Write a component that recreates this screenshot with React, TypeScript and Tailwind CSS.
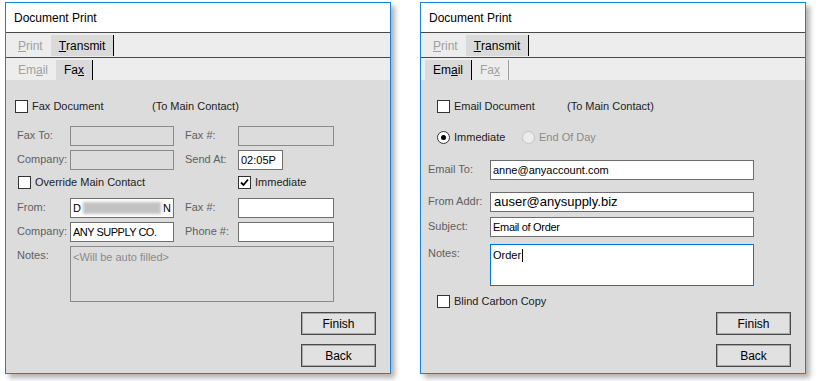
import React from "react";

const font = "font-['Liberation_Sans',Arial,sans-serif]";

function Tab({ label, hot, active, last }: { label: string; hot: number; active?: boolean; last?: boolean }) {
  const text = (
    <>
      {label.slice(0, hot)}
      <u>{label[hot]}</u>
      {label.slice(hot + 1)}
    </>
  );
  return (
    <div
      className={`flex h-full items-center px-2 text-[12px] ${
        active ? "bg-[#dadada] text-black" : "text-[#a0a0a0]"
      } ${active ? "border-r border-black" : last ? "border-r border-[#a0a0a0]" : ""}`}
    >
      {text}
    </div>
  );
}

function Check({ checked, label, className = "" }: { checked?: boolean; label: string; className?: string }) {
  return (
    <div className={`flex items-center gap-[4px] ${className}`}>
      <div className="flex h-[13px] w-[13px] shrink-0 items-center justify-center border border-[#333] bg-white">
        {checked && (
          <svg width="9" height="9" viewBox="0 0 9 9">
            <path d="M1 4.5 L3.5 7 L8 1.5" fill="none" stroke="#000" strokeWidth="1.8" />
          </svg>
        )}
      </div>
      <span className="text-[11px] leading-none text-[#222]">{label}</span>
    </div>
  );
}

function Radio({ on, disabled, label, className = "" }: { on?: boolean; disabled?: boolean; label: string; className?: string }) {
  return (
    <div className={`flex items-center gap-[4px] ${className}`}>
      <div
        className={`flex h-[13px] w-[13px] shrink-0 items-center justify-center rounded-full border ${
          disabled ? "border-[#c4c4c4] bg-[#ececec]" : "border-[#333] bg-white"
        }`}
      >
        {on && <div className="h-[5px] w-[5px] rounded-full bg-black" />}
      </div>
      <span className={`text-[11px] leading-none ${disabled ? "text-[#8a8a8a]" : "text-[#222]"}`}>{label}</span>
    </div>
  );
}

function Box({
  w,
  h = 20,
  disabled,
  focus,
  children,
  className = "",
}: {
  w: number;
  h?: number;
  disabled?: boolean;
  focus?: boolean;
  children?: React.ReactNode;
  className?: string;
}) {
  return (
    <div
      style={{ width: w, height: h }}
      className={`flex shrink-0 overflow-hidden border px-[2px] text-[11px] text-black ${
        disabled ? "border-[#8a8a8a] bg-[#dcdcdc]" : focus ? "border-[#0078d7] bg-white" : "border-[#6e6e6e] bg-white"
      } ${h > 20 ? "items-start pt-[2px]" : "items-center"} ${className}`}
    >
      {children}
    </div>
  );
}

function Label({ w, children, className = "" }: { w: number; children: React.ReactNode; className?: string }) {
  return (
    <div style={{ width: w }} className={`shrink-0 pt-[1px] text-[11px] text-[#606060] ${className}`}>
      {children}
    </div>
  );
}

function Button({ label, className = "" }: { label: string; className?: string }) {
  return (
    <div
      className={`flex h-[23px] w-[75px] items-center justify-center self-end border border-[#4a4a4a] bg-[#e1e1e1] text-[12px] text-black shadow-[inset_0_0_0_1px_#a8a8a8] ${className}`}
    >
      {label}
    </div>
  );
}

function Window({ tab, children }: { tab: "email" | "fax"; children: React.ReactNode }) {
  return (
    <div className="flex h-[372px] w-[386px] flex-col border border-[#1883d7] bg-white shadow-[4px_4px_5px_rgba(0,0,0,0.3)]">
      <div className="flex h-[30px] items-center border-b border-[#4a4a4a] pl-[8px] text-[12px] text-black">
        Document Print
      </div>
      <div className="flex h-[25px] border-b border-[#4a4a4a] bg-[#ededed] pl-[4px] pt-[2px] pb-[1px]">
        <Tab label="Print" hot={0} />
        <Tab label="Transmit" hot={0} active />
      </div>
      <div className="flex h-[22px] bg-[#ededed] pl-[4px] pt-[2px]">
        <Tab label="Email" hot={2} active={tab === "email"} />
        <Tab label="Fax" hot={2} active={tab === "fax"} last />
      </div>
      <div className="flex flex-1 flex-col bg-[#dcdcdc]">{children}</div>
    </div>
  );
}

export default function App() {
  return (
    <div className={`flex h-[381px] w-[818px] gap-[29px] bg-white pl-[5px] pt-[2px] ${font}`}>
      <Window tab="fax">
        <div className="mt-[20px] flex h-[13px] items-center pl-[9px]">
          <Check label="Fax Document" className="w-[137px]" />
          <span className="text-[11px] text-[#222]">(To Main Contact)</span>
        </div>
        <div className="mt-[13px] flex pl-[11px]">
          <Label w={53}>Fax To:</Label>
          <Box w={104} disabled />
          <Label w={53} className="ml-[11px]">Fax #:</Label>
          <Box w={96} disabled />
        </div>
        <div className="mt-[4px] flex pl-[11px]">
          <Label w={53}>Company:</Label>
          <Box w={104} disabled />
          <Label w={53} className="ml-[11px]">Send At:</Label>
          <Box w={45}>02:05P</Box>
        </div>
        <div className="mt-[6px] flex h-[13px] items-center pl-[12px]">
          <Check label="Override Main Contact" className="w-[220px]" />
          <Check label="Immediate" checked />
        </div>
        <div className="mt-[9px] flex pl-[11px]">
          <Label w={53}>From:</Label>
          <Box w={104}>
            <span>D</span>
            <div className="mx-[2px] h-[12px] flex-1 bg-[#c2c2c2] blur-[1.5px]" />
            <span>N</span>
          </Box>
          <Label w={53} className="ml-[11px]">Fax #:</Label>
          <Box w={96} />
        </div>
        <div className="mt-[4px] flex pl-[11px]">
          <Label w={53}>Company:</Label>
          <Box w={104}>
            <span className="tracking-[-0.5px]">ANY SUPPLY CO.</span>
          </Box>
          <Label w={53} className="ml-[11px]">Phone #:</Label>
          <Box w={96} />
        </div>
        <div className="mt-[4px] flex pl-[11px]">
          <Label w={53}>Notes:</Label>
          <Box w={264} h={56} disabled>
            <span className="text-[#8a8a8a]">&lt;Will be auto filled&gt;</span>
          </Box>
        </div>
        <Button label="Finish" className="mr-[14px] mt-[10px]" />
        <Button label="Back" className="mr-[14px] mt-[9px]" />
      </Window>

      <Window tab="email">
        <div className="mt-[20px] flex h-[13px] items-center pl-[16px]">
          <Check label="Email Document" className="w-[130px]" />
          <span className="text-[11px] text-[#222]">(To Main Contact)</span>
        </div>
        <div className="mt-[18px] flex h-[13px] items-center pl-[16px]">
          <Radio label="Immediate" on className="w-[85px]" />
          <Radio label="End Of Day" disabled />
        </div>
        <div className="mt-[16px] flex pl-[7px]">
          <Label w={62}>Email To:</Label>
          <Box w={264}>anne@anyaccount.com</Box>
        </div>
        <div className="mt-[12px] flex pl-[7px]">
          <Label w={62}>From Addr:</Label>
          <Box w={264}>
            <span className="pl-[1px] text-[13px]">auser@anysupply.biz</span>
          </Box>
        </div>
        <div className="mt-[5px] flex pl-[7px]">
          <Label w={62}>Subject:</Label>
          <Box w={264}>
            <span className="tracking-[-0.3px]">Email of Order</span>
          </Box>
        </div>
        <div className="mt-[7px] flex pl-[7px]">
          <Label w={62}>Notes:</Label>
          <Box w={264} h={42} focus>
            <span className="flex items-center">
              Order
              <span className="ml-[1px] inline-block h-[13px] w-px bg-black" />
            </span>
          </Box>
        </div>
        <div className="mt-[9px] flex h-[13px] items-center pl-[16px]">
          <Check label="Blind Carbon Copy" />
        </div>
        <Button label="Finish" className="mr-[14px] mt-[4px]" />
        <Button label="Back" className="mr-[14px] mt-[9px]" />
      </Window>
    </div>
  );
}
